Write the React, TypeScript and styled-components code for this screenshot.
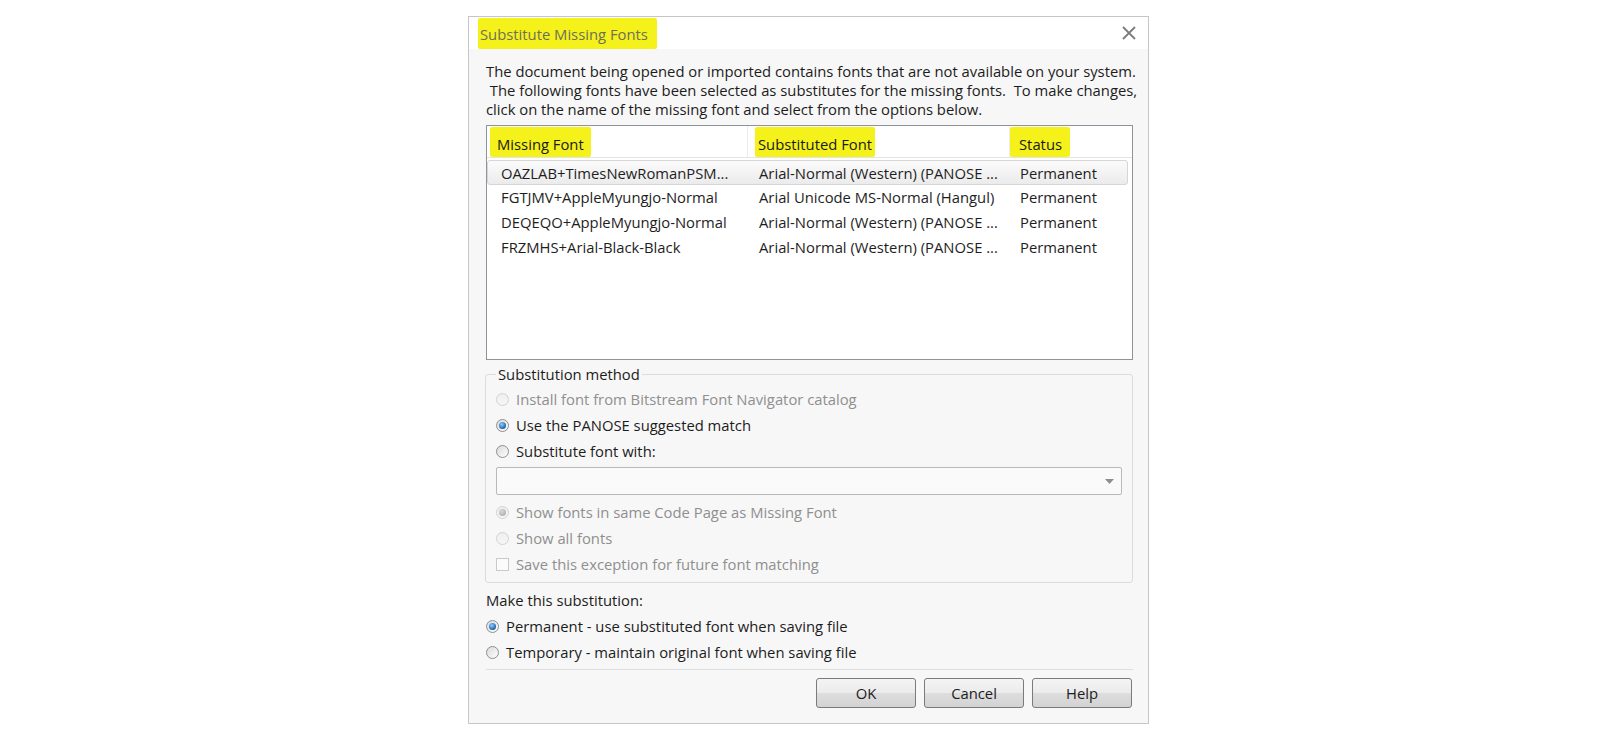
import styled, { createGlobalStyle } from "styled-components";

const GlobalStyle = createGlobalStyle`
  html, body {
    margin: 0;
    padding: 0;
    background: #ffffff;
  }
  body {
    font-family: "Open Sans", "Noto Sans", sans-serif;
    font-size: 14.8px;
    color: #1f1f1f;
  }
`;

const Page = styled.div`
  width: 1610px;
  height: 742px;
  box-sizing: border-box;
  padding: 16px 0 0 468px;
`;

const Dialog = styled.div`
  width: 681px;
  height: 708px;
  box-sizing: border-box;
  border: 1px solid #c6c6c6;
  background: #f7f7f7;
  display: flex;
  flex-direction: column;
`;

const TitleBar = styled.div`
  height: 32px;
  flex: none;
  background: #ffffff;
  display: flex;
  align-items: center;
  justify-content: space-between;
  padding: 0 10px 0 11px;
`;

const Mark = styled.span<{ $pl: number; $pr: number; $h: number; $drop?: number }>`
  display: inline-flex;
  align-items: center;
  box-sizing: border-box;
  height: ${(p) => p.$h}px;
  background: #f4f21a;
  padding: ${(p) => p.$drop ?? 0}px ${(p) => p.$pr}px 0 ${(p) => p.$pl}px;
  margin-left: -${(p) => p.$pl}px;
  border-radius: 2px;
`;

const Title = styled.span`
  color: #6f6f5c;
`;

const CloseButton = styled.button`
  border: 0;
  background: none;
  padding: 0;
  width: 18px;
  height: 18px;
  display: flex;
  align-items: center;
  justify-content: center;
`;

const Body = styled.div`
  flex: 1;
  display: flex;
  flex-direction: column;
  padding: 13px 15px 16px 17px;
`;

const Intro = styled.div`
  line-height: 19px;
  color: #1c1c1c;
  white-space: pre;
`;

const IntroLine = styled.div``;

const ListBox = styled.div`
  margin-top: 6px;
  height: 235px;
  box-sizing: border-box;
  border: 1px solid #8f939b;
  background: #ffffff;
`;

const Columns = styled.div`
  display: grid;
  grid-template-columns: 261px 262px 1fr;
`;

const HeaderRow = styled(Columns)`
  height: 32px;
  border-bottom: 1px solid #e4e4e4;
  box-sizing: border-box;
`;

const HeaderCell = styled.div<{ $pad: number; $sep?: boolean }>`
  display: flex;
  align-items: center;
  padding-left: ${(p) => p.$pad}px;
  border-right: ${(p) => (p.$sep ? "1px solid #ececec" : "0")};
  color: #1a1a1a;
`;

const Rows = styled.div`
  padding-top: 2px;
`;

const Row = styled(Columns)<{ $selected?: boolean }>`
  height: 24.6px;
  box-sizing: border-box;
  margin-right: 4px;
  align-items: center;
  padding-top: 1px;
  border: 1px solid ${(p) => (p.$selected ? "#d6d6d6" : "transparent")};
  border-radius: 3px;
  background: ${(p) =>
    p.$selected ? "linear-gradient(#fbfbfb, #ebebeb)" : "transparent"};
  color: #1e1e1e;
`;

const Cell = styled.div<{ $pad: number }>`
  padding-left: ${(p) => p.$pad}px;
  white-space: nowrap;
  overflow: hidden;
`;

const Group = styled.fieldset`
  margin: 5px 0 0 -1px;
  padding: 2px 10px 5px 10px;
  border: 1px solid #dcdcdc;
  border-radius: 3px;
  min-width: 0;
`;

const Legend = styled.legend`
  padding: 0 2px;
  line-height: 19px;
  color: #1c1c1c;
`;

const Option = styled.label<{ $disabled?: boolean }>`
  display: flex;
  align-items: center;
  gap: 7px;
  height: 26px;
  color: ${(p) => (p.$disabled ? "#8f8f8f" : "#1c1c1c")};
`;

const Radio = styled.span<{ $checked?: boolean; $disabled?: boolean }>`
  position: relative;
  flex: none;
  width: 13px;
  height: 13px;
  box-sizing: border-box;
  border-radius: 50%;
  border: 1px solid ${(p) => (p.$disabled ? "#d2d2d2" : "#8e8f8f")};
  background: ${(p) =>
    p.$disabled
      ? "linear-gradient(#efefef, #f6f6f6)"
      : "linear-gradient(135deg, #d9d9d9, #ffffff)"};

  &::after {
    content: "";
    display: ${(p) => (p.$checked ? "block" : "none")};
    position: absolute;
    left: 2px;
    top: 2px;
    width: 7px;
    height: 7px;
    border-radius: 50%;
    background: ${(p) =>
      p.$disabled
        ? "radial-gradient(circle at 40% 35%, #d8d8d8, #a4a4a4)"
        : "radial-gradient(circle at 40% 35%, #8fd0ff, #1b62a8 70%, #0d3f79)"};
  }
`;

const Check = styled.span`
  flex: none;
  width: 13px;
  height: 13px;
  box-sizing: border-box;
  border: 1px solid #c9c9c9;
  background: #fbfbfb;
`;

const Select = styled.div`
  margin: 3px 0 4px;
  height: 28px;
  box-sizing: border-box;
  border: 1px solid #b9b9b9;
  border-radius: 2px;
  background: #fafafa;
  display: flex;
  align-items: center;
  justify-content: flex-end;
  padding-right: 7px;
`;

const Caption = styled.div`
  margin-top: 8px;
  margin-bottom: 3px;
  line-height: 19px;
  color: #1c1c1c;
`;

const Separator = styled.div`
  margin-top: 4px;
  border-top: 1px solid #dedede;
`;

const Buttons = styled.div`
  margin-top: 8px;
  display: flex;
  justify-content: flex-end;
  gap: 8px;
  padding-right: 1px;
`;

const Button = styled.button`
  width: 100px;
  height: 30px;
  border: 1px solid #7a7a7a;
  border-radius: 3px;
  background: linear-gradient(#f4f4f4 0%, #ebebeb 50%, #dddddd 51%, #d3d3d3 100%);
  font: inherit;
  color: #1c1c1c;
  padding: 0;
`;

const rows = [
  ["OAZLAB+TimesNewRomanPSM...", "Arial-Normal (Western) (PANOSE ...", "Permanent"],
  ["FGTJMV+AppleMyungjo-Normal", "Arial Unicode MS-Normal (Hangul)", "Permanent"],
  ["DEQEQO+AppleMyungjo-Normal", "Arial-Normal (Western) (PANOSE ...", "Permanent"],
  ["FRZMHS+Arial-Black-Black", "Arial-Normal (Western) (PANOSE ...", "Permanent"],
];

export default function App() {
  return (
    <>
      <GlobalStyle />
      <Page>
        <Dialog>
          <TitleBar>
            <Mark $pl={2} $pr={9} $h={31} $drop={1}>
              <Title>Substitute Missing Fonts</Title>
            </Mark>
            <CloseButton aria-label="Close">
              <svg width="16" height="16" viewBox="0 0 16 16">
                <path d="M2 2 L14 14 M14 2 L2 14" stroke="#7c7c7c" strokeWidth="1.8" />
              </svg>
            </CloseButton>
          </TitleBar>
          <Body>
            <Intro>
              <IntroLine>The document being opened or imported contains fonts that are not available on your system.</IntroLine>
              <IntroLine> The following fonts have been selected as substitutes for the missing fonts.  To make changes,</IntroLine>
              <IntroLine>click on the name of the missing font and select from the options below.</IntroLine>
            </Intro>
            <ListBox>
              <HeaderRow>
                <HeaderCell $pad={10} $sep>
                  <Mark $pl={7} $pr={7} $h={30} $drop={4}>Missing Font</Mark>
                </HeaderCell>
                <HeaderCell $pad={10} $sep>
                  <Mark $pl={3} $pr={3} $h={30} $drop={4}>Substituted Font</Mark>
                </HeaderCell>
                <HeaderCell $pad={9}>
                  <Mark $pl={9} $pr={8} $h={30} $drop={4}>Status</Mark>
                </HeaderCell>
              </HeaderRow>
              <Rows>
                {rows.map((r, i) => (
                  <Row key={i} $selected={i === 0}>
                    <Cell $pad={13}>{r[0]}</Cell>
                    <Cell $pad={10}>{r[1]}</Cell>
                    <Cell $pad={9}>{r[2]}</Cell>
                  </Row>
                ))}
              </Rows>
            </ListBox>
            <Group>
              <Legend>Substitution method</Legend>
              <Option $disabled>
                <Radio $disabled />
                Install font from Bitstream Font Navigator catalog
              </Option>
              <Option>
                <Radio $checked />
                Use the PANOSE suggested match
              </Option>
              <Option>
                <Radio />
                Substitute font with:
              </Option>
              <Select>
                <svg width="9" height="5" viewBox="0 0 9 5">
                  <path d="M0 0 H9 L4.5 5 Z" fill="#8e8e8e" />
                </svg>
              </Select>
              <Option $disabled>
                <Radio $disabled $checked />
                Show fonts in same Code Page as Missing Font
              </Option>
              <Option $disabled>
                <Radio $disabled />
                Show all fonts
              </Option>
              <Option $disabled>
                <Check />
                Save this exception for future font matching
              </Option>
            </Group>
            <Caption>Make this substitution:</Caption>
            <Option>
              <Radio $checked />
              Permanent - use substituted font when saving file
            </Option>
            <Option>
              <Radio />
              Temporary - maintain original font when saving file
            </Option>
            <Separator />
            <Buttons>
              <Button>OK</Button>
              <Button>Cancel</Button>
              <Button>Help</Button>
            </Buttons>
          </Body>
        </Dialog>
      </Page>
    </>
  );
}
